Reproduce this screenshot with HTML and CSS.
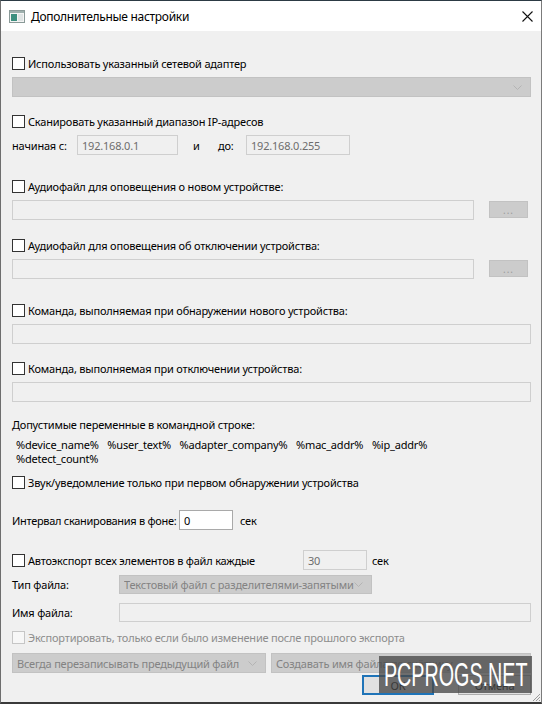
FILE: index.html
```html
<!DOCTYPE html>
<html lang="ru">
<head>
<meta charset="utf-8">
<title>Дополнительные настройки</title>
<link rel="stylesheet" href="styles.css">
</head>
<body>
<div class="window">
  <div class="titlebar">
    <svg class="app-icon" width="16" height="13" viewBox="0 0 16 13">
      <rect x="0.5" y="0.5" width="15" height="12" fill="#f4f4f4" stroke="#8a9a98"/>
      <rect x="1" y="1" width="14" height="2" fill="#9fb0ae"/>
      <rect x="2" y="4" width="6" height="7" fill="#3d8f7f"/>
      <rect x="9" y="4" width="5" height="7" fill="#dfe4e4"/>
    </svg>
    <span class="title">Дополнительные настройки</span>
    <svg class="close" width="11" height="11" viewBox="0 0 11 11">
      <path d="M0.5 0.5 L10.5 10.5 M10.5 0.5 L0.5 10.5" stroke="#111" stroke-width="1.1"/>
    </svg>
  </div>

  <div class="content">
    <div class="check first"><span class="box"></span>Использовать указанный сетевой адаптер</div>
    <div class="combo full next"><span class="combo-text"></span><svg class="chev" width="9" height="5" viewBox="0 0 9 5"><path d="M0.5 0.5 L4.5 4.5 L8.5 0.5" fill="none" stroke="#b4b4b4"/></svg></div>

    <div class="check gap14"><span class="box"></span>Сканировать указанный диапазон IP-адресов</div>
    <div class="ip-row next">
      <span class="ip-label">начиная с:</span>
      <span class="field ip-from">192.168.0.1</span>
      <span class="and">и</span>
      <span class="to">до:</span>
      <span class="field ip-to">192.168.0.255</span>
    </div>

    <div class="check gap21"><span class="box"></span>Аудиофайл для оповещения о новом устройстве:</div>
    <div class="file-row next"><span class="field grow"></span><span class="dots">...</span></div>

    <div class="check gap15"><span class="box"></span>Аудиофайл для оповещения об отключении устройства:</div>
    <div class="file-row next"><span class="field grow"></span><span class="dots">...</span></div>

    <div class="check gap21"><span class="box"></span>Команда, выполняемая при обнаружении нового устройства:</div>
    <div class="field full next"></div>

    <div class="check gap14"><span class="box"></span>Команда, выполняемая при отключении устройства:</div>
    <div class="field full next"></div>

    <div class="plain gap12">Допустимые переменные в командной строке:</div>
    <div class="vars next">%device_name% %user_text% %adapter_company% %mac_addr% %ip_addr%<br>%detect_count%</div>

    <div class="check gap6"><span class="box"></span>Звук/уведомление только при первом обнаружении устройства</div>

    <div class="interval-row gap18">
      <span class="interval-label">Интервал сканирования в фоне:</span>
      <span class="edit">0</span>
      <span class="unit">сек</span>
    </div>

    <div class="auto-row gap20">
      <div class="check"><span class="box"></span>Автоэкспорт всех элементов в файл каждые</div>
      <span class="field secs">30</span>
      <span class="unit2">сек</span>
    </div>

    <div class="form-row gap5">
      <span class="form-label">Тип файла:</span>
      <span class="combo type-combo"><span class="combo-text">Текстовый файл с разделителями-запятыми</span><svg class="chev" width="9" height="5" viewBox="0 0 9 5"><path d="M0.5 0.5 L4.5 4.5 L8.5 0.5" fill="none" stroke="#b4b4b4"/></svg></span>
    </div>

    <div class="form-row gap9">
      <span class="form-label">Имя файла:</span>
      <span class="field name-field"></span>
    </div>

    <div class="check disabled gap5"><span class="box"></span>Экспортировать, только если было изменение после прошлого экспорта</div>

    <div class="combo-row gap6">
      <span class="combo left-combo"><span class="combo-text">Всегда перезаписывать предыдущий файл</span><svg class="chev" width="9" height="5" viewBox="0 0 9 5"><path d="M0.5 0.5 L4.5 4.5 L8.5 0.5" fill="none" stroke="#b4b4b4"/></svg></span>
      <span class="combo right-combo"><span class="combo-text">Создавать имя файла по счётчику</span><svg class="chev" width="9" height="5" viewBox="0 0 9 5"><path d="M0.5 0.5 L4.5 4.5 L8.5 0.5" fill="none" stroke="#b4b4b4"/></svg></span>
    </div>

    <div class="buttons gap2">
      <span class="btn ok">ОК</span>
      <span class="btn cancel">Отмена</span>
    </div>
  </div>

  <div class="watermark"><span class="wm-text">PCPROGS.NET</span></div>
  <svg class="grip" width="9" height="9" viewBox="0 0 9 9">
    <path d="M8 1 L1 8 M8 4 L4 8 M8 7 L7 8" stroke="#9a9a9a" stroke-width="1"/>
  </svg>
</div>
</body>
</html>
```

FILE: styles.css
```css
* { box-sizing: border-box; }
html, body { margin: 0; padding: 0; background: #ffffff; }
body {
  font-family: "Noto Sans", "Open Sans", sans-serif;
  font-size: 11px;
  letter-spacing: -0.2px;
  color: #000;
}
.window {
  position: relative;
  width: 542px;
  height: 704px;
  background: #f0f0f0;
  border-top: 1px solid #2c3a44;
  border-left: 1px solid #6e6e6e;
  border-right: 1px solid #7b7b7b;
  border-bottom: 2px solid #3a3a3a;
  display: flex;
  flex-direction: column;
  overflow: hidden;
}
.titlebar {
  height: 30px;
  background: #fff;
  display: flex;
  align-items: center;
  padding-left: 8px;
  padding-right: 8px;
  flex: none;
}
.app-icon { flex: none; margin-top: 1px; }
.title { margin-left: 6px; font-size: 12px; letter-spacing: -0.3px; }
.close { margin-left: auto; }

.content {
  padding: 0 10px 0 11px;
  display: flex;
  flex-direction: column;
}

.first { margin-top: 22px; }
.next { margin-top: 4px; }
.gap2 { margin-top: 2px; }
.gap5 { margin-top: 5px; }
.gap6 { margin-top: 6px; }
.gap9 { margin-top: 9px; }
.gap12 { margin-top: 12px; }
.gap14 { margin-top: 14px; }
.gap15 { margin-top: 15px; }
.gap18 { margin-top: 18px; }
.gap20 { margin-top: 20px; }
.gap21 { margin-top: 21px; }

.check {
  display: flex;
  align-items: center;
  height: 20px;
  white-space: nowrap;
}
.box {
  width: 13px;
  height: 13px;
  border: 1px solid #333;
  background: #fff;
  margin-right: 3px;
  flex: none;
}
.check.disabled { color: #8d8d8d; }
.check.disabled .box { border-color: #c6c6c6; background: #f7f7f7; }

.plain { height: 20px; display: flex; align-items: center; }

.field {
  display: flex;
  align-items: center;
  height: 20px;
  border: 1px solid #cfcfcf;
  background: #f0f0f0;
  color: #6d6d6d;
  padding-left: 4px;
}
.full { width: 519px; }

.combo {
  display: flex;
  align-items: center;
  height: 20px;
  background: #cccccc;
  border: 1px solid #c2c2c2;
  color: #838383;
  padding-left: 4px;
  padding-right: 8px;
}
.combo-text { flex: 1; white-space: nowrap; overflow: hidden; }
.chev { flex: none; }

.ip-row { display: flex; align-items: center; height: 20px; }
.ip-label { width: 65px; flex: none; }
.ip-from { width: 101px; }
.and { margin-left: 15px; width: 25px; }
.to { width: 28px; }
.ip-to { width: 104px; }

.file-row { display: flex; align-items: flex-start; height: 20px; }
.grow { width: 462px; }
.dots {
  margin-left: 15px;
  margin-top: 1px;
  width: 39px;
  height: 17px;
  background: #cccccc;
  border: 1px solid #c2c2c2;
  color: #9c9c9c;
  font-size: 10px;
  display: flex;
  align-items: center;
  justify-content: center;
  letter-spacing: 1px;
}

.vars {
  line-height: 14px;
  padding-left: 4px;
  word-spacing: 6px;
  white-space: nowrap;
}

.interval-row { display: flex; align-items: center; height: 20px; }
.interval-label { width: 167px; flex: none; white-space: nowrap; letter-spacing: -0.3px; }
.edit {
  width: 54px;
  height: 20px;
  background: #fff;
  border: 1px solid #a9a9a9;
  padding-left: 4px;
  display: flex;
  align-items: center;
}
.unit { margin-left: 7px; }

.auto-row { display: flex; align-items: center; height: 20px; }
.auto-row .check { width: 291px; flex: none; }
.secs { width: 64px; }
.unit2 { margin-left: 5px; }

.form-row { display: flex; align-items: center; height: 19px; }
.form-label { width: 107px; flex: none; }
.type-combo { width: 253px; height: 19px; }
.name-field { width: 412px; height: 19px; }

.combo-row { display: flex; height: 20px; gap: 5px; }
.left-combo { width: 254px; }
.right-combo { width: 260px; }

.buttons { display: flex; height: 20px; justify-content: flex-end; gap: 24px; }
.btn {
  display: flex;
  align-items: center;
  justify-content: center;
  height: 20px;
  background: #e1e1e1;
}
.ok { width: 72px; border: 2px solid #1f74b8; }
.cancel { width: 73px; border: 1px solid #adadad; }

.watermark {
  position: absolute;
  left: 378px;
  top: 655px;
  width: 153px;
  height: 37px;
  background: rgba(72, 72, 72, 0.78);
  display: flex;
  align-items: center;
  justify-content: center;
  overflow: hidden;
}
.wm-text {
  display: inline-block;
  color: #fff;
  font-family: "Liberation Sans", Arial, sans-serif;
  font-size: 34px;
  letter-spacing: 0;
  line-height: 37px;
  white-space: nowrap;
  transform: scaleX(0.58);
}
.grip { position: absolute; right: 0; bottom: 0; }
```
